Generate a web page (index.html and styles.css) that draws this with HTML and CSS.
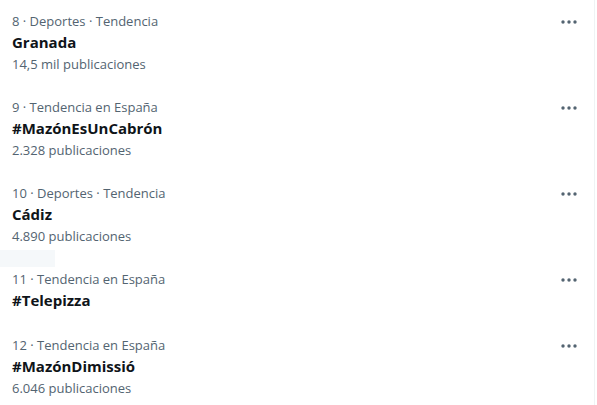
FILE: index.html
```html
<!DOCTYPE html>
<html lang="es">
<head>
<meta charset="utf-8">
<link rel="stylesheet" href="styles.css">
</head>
<body>
<div class="panel">
  <div class="trend">
    <div class="text">
      <div class="meta">8 · Deportes · Tendencia</div>
      <div class="title">Granada</div>
      <div class="count">14,5 mil publicaciones</div>
    </div>
    <svg class="more" width="20" height="8" viewBox="0 0 20 8"><circle cx="4" cy="4" r="1.7"/><circle cx="10" cy="4" r="1.7"/><circle cx="16" cy="4" r="1.7"/></svg>
  </div>
  <div class="trend">
    <div class="text">
      <div class="meta">9 · Tendencia en España</div>
      <div class="title">#MazónEsUnCabrón</div>
      <div class="count">2.328 publicaciones</div>
    </div>
    <svg class="more" width="20" height="8" viewBox="0 0 20 8"><circle cx="4" cy="4" r="1.7"/><circle cx="10" cy="4" r="1.7"/><circle cx="16" cy="4" r="1.7"/></svg>
  </div>
  <div class="trend">
    <div class="text">
      <div class="meta">10 · Deportes · Tendencia</div>
      <div class="title">Cádiz</div>
      <div class="count">4.890 publicaciones</div>
    </div>
    <svg class="more" width="20" height="8" viewBox="0 0 20 8"><circle cx="4" cy="4" r="1.7"/><circle cx="10" cy="4" r="1.7"/><circle cx="16" cy="4" r="1.7"/></svg>
  </div>
  <div class="trend">
    <div class="hover"></div>
    <div class="text">
      <div class="meta">11 · Tendencia en España</div>
      <div class="title">#Telepizza</div>
    </div>
    <svg class="more" width="20" height="8" viewBox="0 0 20 8"><circle cx="4" cy="4" r="1.7"/><circle cx="10" cy="4" r="1.7"/><circle cx="16" cy="4" r="1.7"/></svg>
  </div>
  <div class="trend">
    <div class="text">
      <div class="meta">12 · Tendencia en España</div>
      <div class="title">#MazónDimissió</div>
      <div class="count">6.046 publicaciones</div>
    </div>
    <svg class="more" width="20" height="8" viewBox="0 0 20 8"><circle cx="4" cy="4" r="1.7"/><circle cx="10" cy="4" r="1.7"/><circle cx="16" cy="4" r="1.7"/></svg>
  </div>
</div>
</body>
</html>
```
FILE: styles.css
```css
html, body {
  margin: 0;
  padding: 0;
  background: #ffffff;
}
body {
  font-family: "Open Sans", "Noto Sans", sans-serif;
  -webkit-font-smoothing: antialiased;
}
.panel {
  width: 594px;
  height: 405px;
  border-right: 1px solid #eff3f4;
  overflow: hidden;
}
.trend {
  position: relative;
  display: flex;
  justify-content: space-between;
  align-items: flex-start;
  padding: 12px 15px 12px 12px;
}
.hover {
  position: absolute;
  left: 0;
  top: -8px;
  width: 55px;
  height: 17px;
  background: #f5f8fa;
}
.meta {
  font-size: 13px;
  line-height: 18px;
  color: #536471;
}
.title {
  font-size: 15px;
  line-height: 24px;
  font-weight: 700;
  color: #0f1419;
}
.count {
  font-size: 13px;
  line-height: 20px;
  color: #536471;
}
.more {
  fill: #536471;
  margin-top: 6px;
}
```
